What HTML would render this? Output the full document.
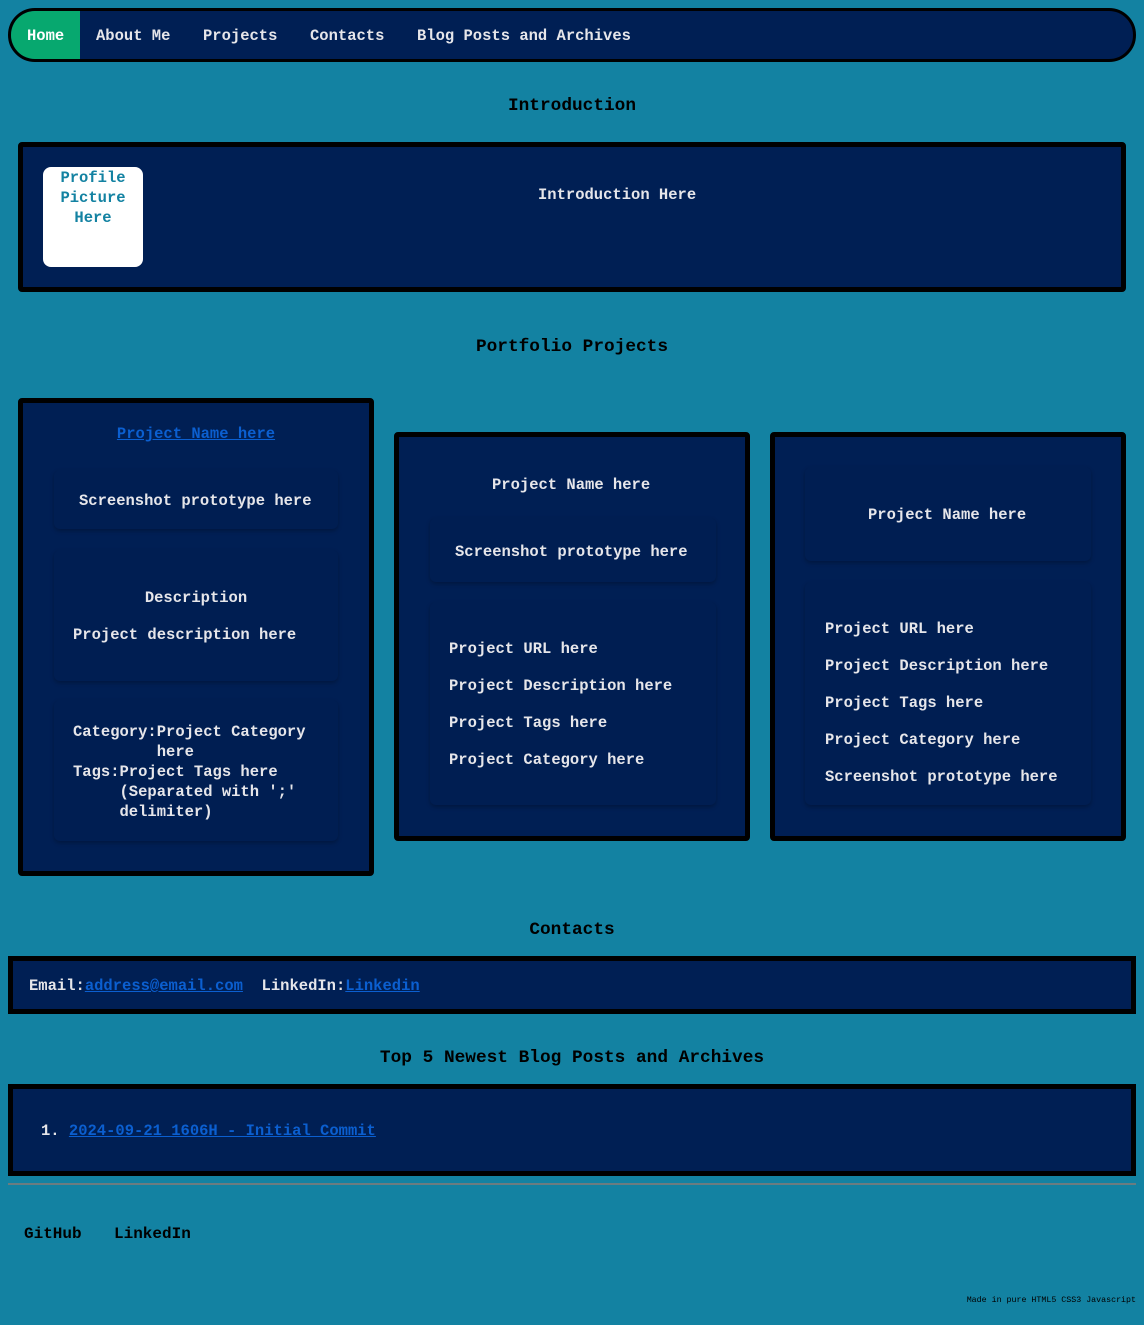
<!DOCTYPE html>
<html><head><meta charset="utf-8"><style>
*{margin:0;padding:0;box-sizing:border-box}
body{width:1144px;height:1325px;background:#1382a2;font-family:"Liberation Mono","DejaVu Sans Mono",monospace;font-weight:bold;font-size:15.5px;color:#e6e6ea;position:relative;overflow:hidden}
.a{position:absolute}
.t{position:absolute;line-height:20px;white-space:pre}
.c{text-align:center}
.box{position:absolute;background:#001f54;border:5px solid #000}
.in{position:absolute;background:#001e52;border-radius:6px;box-shadow:0 2px 4px rgba(0,0,0,.25)}
h2{position:absolute;left:0;width:1144px;text-align:center;font-size:17.8px;line-height:22px;color:#000}
a{color:#0b5fd0;text-decoration:underline}
</style></head><body>
<div class="a" style="left:8px;top:8px;width:1128px;height:54px;background:#001f54;border:3px solid #000;border-radius:27px;overflow:hidden">
<div class="a" style="left:0;top:0;width:69px;height:48px;background:#07a86f"></div>
</div>
<div class="t" style="left:27px;top:26px;color:#fff">Home</div>
<div class="t" style="left:96px;top:26px">About Me</div>
<div class="t" style="left:203px;top:26px">Projects</div>
<div class="t" style="left:310px;top:26px">Contacts</div>
<div class="t" style="left:417px;top:26px">Blog Posts and Archives</div>

<h2 style="top:95px">Introduction</h2>
<div class="box" style="left:18px;top:142px;width:1108px;height:150px;border-radius:4px"></div>
<div class="a" style="left:43px;top:167px;width:100px;height:100px;background:#fff;border-radius:8px"></div>
<div class="t c" style="left:43px;top:168px;width:100px;color:#1382a2">Profile
Picture
Here</div>
<div class="t" style="left:538px;top:185px">Introduction Here</div>

<h2 style="top:336px">Portfolio Projects</h2>

<div class="box" style="left:18px;top:398px;width:356px;height:478px;border-radius:4px"></div>
<div class="t c" style="left:18px;top:424px;width:356px"><a>Project Name here</a></div>
<div class="in" style="left:54px;top:470px;width:284px;height:59px"></div>
<div class="t" style="left:79px;top:491px">Screenshot prototype here</div>
<div class="in" style="left:54px;top:550px;width:284px;height:131px"></div>
<div class="t c" style="left:54px;top:588px;width:284px">Description</div>
<div class="t" style="left:73px;top:625px">Project description here</div>
<div class="in" style="left:54px;top:700px;width:284px;height:141px"></div>
<div class="t" style="left:73px;top:722px">Category:Project Category
         here
Tags:Project Tags here
     (Separated with ';'
     delimiter)</div>

<div class="box" style="left:394px;top:432px;width:356px;height:409px;border-radius:4px"></div>
<div class="t" style="left:492px;top:475px">Project Name here</div>
<div class="in" style="left:430px;top:518px;width:286px;height:64px"></div>
<div class="t" style="left:455px;top:542px">Screenshot prototype here</div>
<div class="in" style="left:430px;top:602px;width:286px;height:203px"></div>
<div class="t" style="left:449px;top:639px">Project URL here</div>
<div class="t" style="left:449px;top:676px">Project Description here</div>
<div class="t" style="left:449px;top:713px">Project Tags here</div>
<div class="t" style="left:449px;top:750px">Project Category here</div>

<div class="box" style="left:770px;top:432px;width:356px;height:409px;border-radius:4px"></div>
<div class="in" style="left:805px;top:467px;width:286px;height:94px"></div>
<div class="t" style="left:868px;top:505px">Project Name here</div>
<div class="in" style="left:805px;top:582px;width:286px;height:223px"></div>
<div class="t" style="left:825px;top:619px">Project URL here</div>
<div class="t" style="left:825px;top:656px">Project Description here</div>
<div class="t" style="left:825px;top:693px">Project Tags here</div>
<div class="t" style="left:825px;top:730px">Project Category here</div>
<div class="t" style="left:825px;top:767px">Screenshot prototype here</div>

<h2 style="top:919px">Contacts</h2>
<div class="box" style="left:8px;top:956px;width:1128px;height:58px"></div>
<div class="t" style="left:29px;top:976px">Email:<a>address@email.com</a>  LinkedIn:<a>Linkedin</a></div>

<h2 style="top:1047px">Top 5 Newest Blog Posts and Archives</h2>
<div class="box" style="left:8px;top:1084px;width:1128px;height:92px"></div>
<div class="t" style="left:41px;top:1121px">1. <a>2024-09-21 1606H - Initial Commit</a></div>
<div class="a" style="left:8px;top:1183px;width:1128px;height:2px;background:#6b7c80"></div>

<div class="t" style="left:24px;top:1224px;color:#000;font-size:16px">GitHub</div>
<div class="t" style="left:114px;top:1224px;color:#000;font-size:16px">LinkedIn</div>
<div class="t" style="left:900px;top:1296px;width:236px;text-align:right;color:#000;font-size:8.3px;line-height:10px;font-weight:normal">Made in pure HTML5 CSS3 Javascript</div>
</body></html>
